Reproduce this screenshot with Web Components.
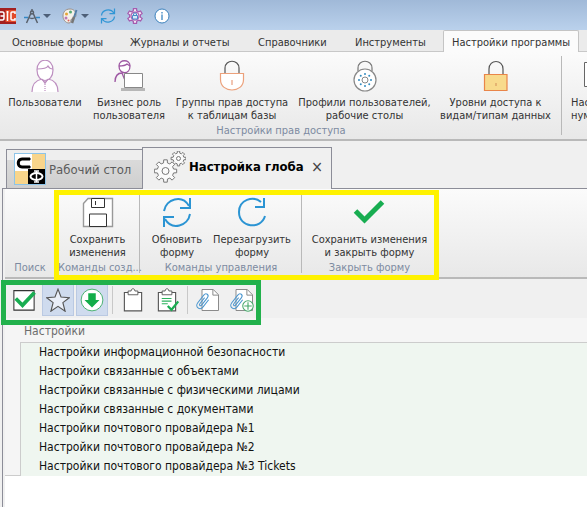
<!DOCTYPE html>
<html lang="ru">
<head>
<meta charset="utf-8">
<title>Настройка глобальных параметров</title>
<style>
  body { margin: 0; background: #f0f0f0; overflow: hidden; font: 11px/13px "DejaVu Sans Condensed", "Noto Sans", sans-serif; color: #333; }
</style>
</head>
<body>
<settings-app></settings-app>
<script>
const gear = (cx, cy, r1, r2, n, hole) => {
  let d = '';
  const step = Math.PI * 2 / n;
  const p = (r, a) => (cx + r * Math.cos(a)).toFixed(2) + ' ' + (cy + r * Math.sin(a)).toFixed(2);
  for (let i = 0; i < n; i++) {
    const a = i * step - Math.PI / 2;
    d += (i ? 'L' : 'M') + p(r2, a - step * .3) + 'L' + p(r1, a - step * .2) + 'L' + p(r1, a + step * .2) + 'L' + p(r2, a + step * .3);
  }
  return `<path d="${d}Z"/><circle cx="${cx}" cy="${cy}" r="${hole}"/>`;
};
const dots = Array.from({ length: 8 }, (_, i) => {
  const a = i * Math.PI / 4;
  return `<circle cx="${(16 + 6 * Math.cos(a)).toFixed(2)}" cy="${(20 + 6 * Math.sin(a)).toFixed(2)}" r="1"/>`;
}).join('');
const clip = '<g transform="translate(10 18) rotate(38)"><path d="M4-6V6c0 7-9 7-9 0V-7c0-5 6-5 6 0V5c0 3-3 3-3 0V-5" fill="none" stroke="#4a96cf" stroke-width="1.400"/></g>';
const page = '<path d="M8 2h15l7 7v21H8z" fill="#fff" stroke="#888" stroke-width="1.300"/><path d="M22.500 2v7.500h7" fill="none" stroke="#888" stroke-width="1.300"/>';
const board = '<path d="M4.500 6h23v24.500h-23z" fill="#fff" stroke="#555" stroke-width="1.500"/><path d="M9.500 9V4h4c0-4 5-4 5 0h4v5z" fill="#fff" stroke="#555" stroke-width="1.200"/>';
const icons = {
  logo: '<path d="M0 0h32v32H0z" fill="#e34a29"/><path d="M0 0h11v32H0zM0 0h32v4H0zM0 28h32v4H0z" fill="#a32020"/><path d="M0 8h5q3 0 3 4v8q0 4-3 4H0M1 16h6M15 6v20M13 8h4M30 12V8h-6q-2 0-2 2v12q0 2 2 2h6v-4" fill="none" stroke="#fff" stroke-width="3"/>',
  compass: '<g fill="none" stroke="#59616c" stroke-width="3"><path d="M16 2v5M14 10 5 30M18 10l9 20M10 19q6 4 12 0"/><circle cx="16" cy="9" r="3"/></g><path d="M0 19h8M24 19h8" stroke="#3489c5" stroke-width="3"/>',
  palette: '<path d="M16 2C6 2 2 9 2 16s5 14 12 14c5 0 2-5 5-8s9-1 9-8S23 2 16 2z" fill="#f5f1e9" stroke="#9b8f87" stroke-width="2"/><circle cx="9" cy="12" r="3" fill="#e6a536"/><circle cx="17" cy="8" r="3" fill="#57aa75"/><circle cx="8" cy="20" r="3" fill="#bf78b4"/><circle cx="13" cy="25" r="2" fill="#db625c"/><path d="m29 4-5 15" stroke="#547fa8" stroke-width="4"/><path d="m24 18-4 12" stroke="#777" stroke-width="5"/>',
  refreshSmall: '<path d="M3 15C4 4 20-1 28 10M29 1v10H19M29 17C28 28 12 33 4 22M3 31V21h10" fill="none" stroke="#3196d5" stroke-width="2.500"/>',
  gearSmall: `<g fill="#f3e9f5" stroke="#a65caf" stroke-width="2.500">${gear(16, 16, 15, 11, 6, 8)}</g><path d="M11 15h10v7H11zM13 15v-3c0-3 6-3 6 0v3" fill="#d6eafa" stroke="#4a8bc8" stroke-width="2"/>`,
  info: '<circle cx="16" cy="16" r="14" fill="#fff" stroke="#3c82bd" stroke-width="2"/><path d="M16 13v11M16 8v3" stroke="#3481c0" stroke-width="2.500"/>',
  user: '<g fill="#fff" stroke="#bd8fc0" stroke-width="1.200"><path d="M3 32c0-9 5-12 10-13l3 4 3-4c6 1 10 4 10 13"/><path d="M8 10c0-13 16-13 16 0 0 14-16 14-16 0z"/><path d="M8 9c7 0 10-1 11-3 1 2 3 3 5 3M13 19l3 4 3-4" fill="none"/><path d="M16 24v8" stroke-dasharray="1 1"/></g>',
  role: '<g fill="#fff" stroke="#9e58a3" stroke-width="1.300"><path d="M2 22c0-6 3-9 7-9l2 5 3-4" fill="none"/><path d="M6 6c0-7 11-7 11 0 0 9-11 9-11 0z"/><path d="M6 6c5 0 7-1 8-2l3 2" fill="none"/></g><path d="M11.500 13.500h18v14h-18z" fill="#fff" stroke="#888"/><path d="M8 28h24v3H8z" fill="#b7b7b7"/>',
  lockRound: '<path d="M9 13V8c0-9 14-9 14 0v5" fill="none" stroke="#555" stroke-width="1.200"/><path d="M4.500 13.500h23v6c0 14-23 14-23 0z" fill="#fff" stroke="#eca17b" stroke-width="1.200"/><path d="M16 20v5" stroke="#e48b65"/>',
  lockDial: '<path d="M9 11V8c0-9 14-9 14 0v3" fill="none" stroke="#777" stroke-width="1.200"/><circle cx="16" cy="20" r="11" fill="#fff" stroke="#888" stroke-width="1.200"/><circle cx="16" cy="20" r="3" fill="#fff" stroke="#888"/><g fill="#348cc0">' + dots + '</g>',
  lockSquare: '<path d="M9 14V9c0-10 14-10 14 0v5" fill="none" stroke="#555" stroke-width="1.200"/><path d="M4.500 14.500h22.500v16H4.500z" fill="#f8da8c" stroke="#e98549" stroke-width="1.200"/><path d="M16 23v3" stroke="#d18e58"/>',
  sheet: '<path d="M.5 2.500h30v24H.5z" fill="#fff" stroke="#666"/>',
  brand: '<path d="M0 0h32v32H0z" fill="#8dc4e8"/><path d="M1 1h30v30H1z" fill="#fff"/><path d="M18 1h13v15H18zM1 18h13v13H1z" fill="#f8d58b"/><path d="M14 16h17v15H14z" fill="#000"/><path d="M16 6H8c-5 0-5 8 0 8h8M15 5v2M15 13v2" fill="none" stroke="#000" stroke-width="3"/><path d="M22.500 18v11M20 18h5M20 29h5" stroke="#fff" stroke-width="1.500"/><ellipse cx="22.500" cy="23.500" rx="6" ry="3.500" fill="none" stroke="#fff" stroke-width="2"/>',
  gears: `<g fill="#fafafa" stroke="#777" stroke-width="1">${gear(24.500, 7.500, 7.500, 5.500, 8, 2)}${gear(11.500, 20, 11.300, 8.300, 8, 3.500)}</g>`,
  save: '<path d="M1.500 6.500 6 1.500h24.500v28h-29z" fill="#fff" stroke="#999" stroke-width="1.400"/><path d="M9.500 1.500h13v9h-13zM7.500 17h17v12.500h-17z" fill="#fff" stroke="#333"/><path d="M13.500 4v4" stroke="#333"/>',
  refresh: '<g fill="none" stroke="#2b94d3" stroke-width="2"><path d="M3 14C5 2 21-3 28 9M29 1v10H19M29 17c-2 12-18 17-25 5M3 30V20h10"/></g>',
  reload: '<path d="M25 5C17-2 3 3 3 15c0 16 22 18 26 4M28 1v9H19" fill="none" stroke="#2b94d3" stroke-width="2"/>',
  check: '<path d="m2.500 14 9 9L29.500 5" fill="none" stroke="#18ad51" stroke-width="5"/>',
  box: '<path d="M2.500 3.500h27v26h-27z" fill="#fff" stroke="#333" stroke-width="1.400"/><path d="m5 14 9 9L30 6" fill="none" stroke="#18ad51" stroke-width="5"/>',
  star: '<path d="m16 1.500 4 10.500 11 1-8.500 6.500 3 11.500L16 24.500 6.500 31l3-11.500L1 13l11-1z" fill="#e9eef8" stroke="#555" stroke-width="1.500"/>',
  down: '<circle cx="16" cy="16" r="14.500" fill="#fff" stroke="#46af6f" stroke-width="1.300"/><path d="M11 7h10v9h5L16 26 6 16h5z" fill="#12ad49"/>',
  board,
  boardCheck: board + '<path d="M9 14h13M9 17.500h13M9 21h8" stroke="#2bb35d" stroke-width="1.500"/><path d="m17 24 5 5 9-11" fill="none" stroke="#18ad51" stroke-width="3"/>',
  attach: page + clip,
  attachAdd: page + clip + '<circle cx="24" cy="24" r="7" fill="#fff" stroke="#48a96b" stroke-width="1.400"/><path d="M24 19v10M19 24h10" stroke="#48a96b" stroke-width="1.500"/>'
};

const define = (name, html) => customElements.define(name, class extends HTMLElement {
  constructor() {
    super();
    const t = document.createElement('template');
    t.innerHTML = html;
    this.attachShadow({ mode: 'open' }).append(t.content.cloneNode(true));
  }
});
const reset = 'button{font:inherit;color:inherit;background:none;border:0;margin:0;padding:0;cursor:default}';

customElements.define('app-icon', class extends HTMLElement {
  connectedCallback() {
    if (this.shadowRoot) return;
    this.attachShadow({ mode: 'open' }).innerHTML =
      `<style>:host{display:block;flex:none;width:var(--size,32px);height:var(--size,32px)}svg{display:block;width:100%;height:100%}</style>
       <svg viewBox="0 0 32 32" aria-hidden="true">${icons[this.getAttribute('name')]}</svg>`;
  }
});

define('title-bar', `<style>${reset}
  :host{display:flex;align-items:center;height:30px;gap:11px;padding-top:2px;box-sizing:border-box;background:linear-gradient(#a0b9d8,#bad1ec);--size:16px}
  button{display:flex;align-items:center;gap:3px}
  .drop::after{content:"";border:4px solid transparent;border-top-color:#4d5f78;border-bottom:0}
  .drop{margin-left:-3px}.drop+.drop{margin-left:0}
</style>
<app-icon name="logo"></app-icon>
<button class="drop" aria-label="Конструктор"><app-icon name="compass"></app-icon></button>
<button class="drop" aria-label="Оформление"><app-icon name="palette"></app-icon></button>
<button aria-label="Обновить"><app-icon name="refreshSmall"></app-icon></button>
<button aria-label="Параметры"><app-icon name="gearSmall"></app-icon></button>
<button aria-label="О программе"><app-icon name="info"></app-icon></button>`);

define('ribbon-tab', `<style>${reset}
  :host{display:block;flex:none}
  button{display:block;height:23px;padding:0 10px;white-space:nowrap;border:1px solid transparent;border-bottom:0}
  :host([active]) button{padding:0 8px;background:#fbfbfb;border-color:#c4c4c4;border-radius:2px 2px 0 0}
</style><button role="tab"><slot></slot></button>`);

define('ribbon-tabs', `<style>
  :host{display:grid;grid-template-columns:118px 128px 97px 99px 134px;height:22px;padding-left:1px;background:#ebebeb;box-shadow:inset 0 -1px #c8c8c8}
</style><slot></slot>`);

define('ribbon-item', `<style>${reset}
  :host{display:block;flex:none}
  button{display:flex;flex-direction:column;align-items:center;gap:4px;width:100%;white-space:nowrap;text-align:center}
  span{margin:0 -20px}
  :host([start]) button{text-align:left;align-items:flex-start}
  :host([start]) span{margin:0}
  :host([start]) ::slotted(app-icon){margin-left:13px}
</style><button><slot name="icon"></slot><span><slot></slot></span></button>`);

define('ribbon-group', `<style>
  :host{display:flex;flex-direction:column;flex:none;box-sizing:border-box;height:100%;padding:var(--pad,7px 0 3px);background:linear-gradient(#b9b9b9,#b9b9b9) right center/1px calc(100% - 8px) no-repeat}
  :host([plain]){background:none}
  .items{display:flex;flex:1;justify-content:var(--justify,center);padding-left:var(--start,0);gap:var(--gap,13px)}
  .caption{padding-left:var(--cap,0);color:#7d8aa1;text-align:center;white-space:nowrap}
</style><div class="items"><slot></slot></div><div class="caption"><slot name="caption"></slot></div>`);

define('ribbon-bar', `<style>
  :host{display:flex;box-sizing:border-box;height:var(--bar,90px);overflow:hidden;background:linear-gradient(#fbfbfb,#e8e8e8);border-bottom:2px solid #b9b9b9}
</style><slot></slot>`);

define('document-tab', `<style>${reset}
  :host{display:flex;flex:none;align-items:center;box-sizing:border-box;width:137px;height:40px;padding-left:7px;gap:3px;border:1px solid #8c8d98;margin-right:-1px;background:linear-gradient(#eee 0 25%,#dadada 26%,#cfcfcf);color:#5c5c5c;font-size:13px}
  :host([active]){width:190px;height:42px;padding:0 8px 4px 11px;border-bottom:0;background:#f0f0f0;color:#000;font-weight:bold}
  .label{flex:1;text-align:left;white-space:nowrap}
  .close{display:none;font-weight:normal;font-size:16px;line-height:16px;color:#444}
  :host([active]) .close{display:block}
</style><slot name="icon"></slot><button class="label" role="tab"><slot></slot></button><button class="close" aria-label="Закрыть">×</button>`);

define('document-tabs', `<style>
  :host{display:flex;align-items:flex-end;height:48px;padding-left:6px;background:linear-gradient(#8c8d98,#8c8d98) 2px 100%/100% 1px no-repeat #f0f0f0}
</style><slot></slot>`);

define('tool-button', `<style>${reset}
  :host{display:block;flex:none;--size:24px}
  button{display:flex;align-items:center;justify-content:center;width:32px;height:32px;box-sizing:border-box;border:1px solid transparent}
  :host([on]) button{background:#cfdbee;border-color:#bac9e2}
</style><button><slot></slot></button>`);

define('tool-bar', `<style>
  :host{display:flex;align-items:center;gap:2px;height:39px;box-sizing:border-box;padding:3px 0 0 3px;background:#f0f0f0}
  ::slotted(hr){width:1px;height:28px;margin:0 2px;border:0;background:#c8c8c8}
</style><slot></slot>`);

define('settings-tree', `<style>
  :host{display:block;background:#f5f5f5}
  table{width:100%;border-collapse:collapse;font-size:12px;line-height:19px;color:#111}
  td,th{padding:0;text-align:left;font-weight:normal;white-space:nowrap}
  th{height:24px;padding:3px 0 0 19px;box-sizing:border-box;color:#6d6d6d}
  td:first-child{width:15px;border-right:1px solid #ccc}
  td:last-child{background:#eff6f0;padding-left:18px;height:19px}
  tbody tr:first-child td:last-child{border-top:1px solid #ccc}
  tbody tr:last-child td:first-child{border-bottom:1px solid #ccc}
</style>
<table><thead><tr><th colspan="2">Настройки</th></tr></thead><tbody>
<tr><td></td><td>Настройки информационной безопасности</td></tr>
<tr><td></td><td>Настройки связанные с объектами</td></tr>
<tr><td></td><td>Настройки связанные с физическими лицами</td></tr>
<tr><td></td><td>Настройки связанные с документами</td></tr>
<tr><td></td><td>Настройки почтового провайдера №1</td></tr>
<tr><td></td><td>Настройки почтового провайдера №2</td></tr>
<tr><td></td><td>Настройки почтового провайдера №3 Tickets</td></tr>
</tbody></table>`);

define('mark-frame', `<style>
  :host{display:block;position:absolute;box-sizing:border-box;pointer-events:none;border:5px solid var(--ink)}
</style>`);

define('settings-app', `<style>
  :host{display:flex;flex-direction:column;min-height:100vh}
  .main{--pad:8px 0 2px;--bar:89px;--justify:flex-start}
  .w72{width:72px}.w70{width:70px}.w110{width:110px}.w129{width:129px}.w107{width:107px}.w50{width:50px}.w76{width:76px}
  .access{width:562px;--start:9px}
  .numbering{--start:9px}
  .panel{position:relative;flex:1;display:flex;flex-direction:column;margin-left:2px;padding-left:2px;border-left:1px solid #8c8d98}
  .local{--pad:8px 0 3px;--gap:12px}
  .search{width:50px}.create{width:85px;--cap:3px}.manage{width:162px}.closing{width:135px}
  .body{flex:1;background:#fff}
  .yellow{--ink:#fff200;left:51px;top:1px;width:385px;height:90px}
  .green{--ink:#22b14c;left:-2px;top:91px;width:260px;height:45px}
</style>
<title-bar></title-bar>
<ribbon-tabs role="tablist">
  <ribbon-tab>Основные формы</ribbon-tab><ribbon-tab>Журналы и отчеты</ribbon-tab><ribbon-tab>Справочники</ribbon-tab><ribbon-tab>Инструменты</ribbon-tab><ribbon-tab active>Настройки программы</ribbon-tab>
</ribbon-tabs>
<ribbon-bar class="main">
  <ribbon-group class="access">
    <ribbon-item class="w72"><app-icon slot="icon" name="user"></app-icon>Пользователи</ribbon-item>
    <ribbon-item class="w70"><app-icon slot="icon" name="role"></app-icon>Бизнес роль<br>пользователя</ribbon-item>
    <ribbon-item class="w110"><app-icon slot="icon" name="lockRound"></app-icon>Группы прав доступа<br>к таблицам базы</ribbon-item>
    <ribbon-item class="w129"><app-icon slot="icon" name="lockDial"></app-icon>Профили пользователей,<br>рабочие столы</ribbon-item>
    <ribbon-item class="w107"><app-icon slot="icon" name="lockSquare"></app-icon>Уровни доступа к<br>видам/типам данных</ribbon-item>
    <span slot="caption">Настройки прав доступа</span>
  </ribbon-group>
  <ribbon-group class="numbering" plain>
    <ribbon-item start><app-icon slot="icon" name="sheet"></app-icon>Нас<br>нум</ribbon-item>
  </ribbon-group>
</ribbon-bar>
<document-tabs role="tablist">
  <document-tab><app-icon slot="icon" name="brand"></app-icon>Рабочий стол</document-tab>
  <document-tab active><app-icon slot="icon" name="gears"></app-icon>Настройка глоба</document-tab>
</document-tabs>
<div class="panel">
  <ribbon-bar class="local">
    <ribbon-group class="search" plain><span slot="caption">Поиск</span></ribbon-group>
    <ribbon-group class="create"><ribbon-item><app-icon slot="icon" name="save"></app-icon>Сохранить<br>изменения</ribbon-item><span slot="caption">Команды созд...</span></ribbon-group>
    <ribbon-group class="manage"><ribbon-item class="w50"><app-icon slot="icon" name="refresh"></app-icon>Обновить<br>форму</ribbon-item><ribbon-item class="w76"><app-icon slot="icon" name="reload"></app-icon>Перезагрузить<br>форму</ribbon-item><span slot="caption">Команды управления</span></ribbon-group>
    <ribbon-group class="closing" plain><ribbon-item><app-icon slot="icon" name="check"></app-icon>Сохранить изменения<br>и закрыть форму</ribbon-item><span slot="caption">Закрыть форму</span></ribbon-group>
  </ribbon-bar>
  <tool-bar>
    <tool-button><app-icon name="box"></app-icon></tool-button>
    <tool-button on><app-icon name="star"></app-icon></tool-button>
    <tool-button on><app-icon name="down"></app-icon></tool-button>
    <hr>
    <tool-button><app-icon name="board"></app-icon></tool-button>
    <tool-button><app-icon name="boardCheck"></app-icon></tool-button>
    <hr>
    <tool-button><app-icon name="attach"></app-icon></tool-button>
    <tool-button><app-icon name="attachAdd"></app-icon></tool-button>
  </tool-bar>
  <settings-tree></settings-tree>
  <div class="body"></div>
  <mark-frame class="yellow"></mark-frame>
  <mark-frame class="green"></mark-frame>
</div>`);
</script>
</body>
</html>
